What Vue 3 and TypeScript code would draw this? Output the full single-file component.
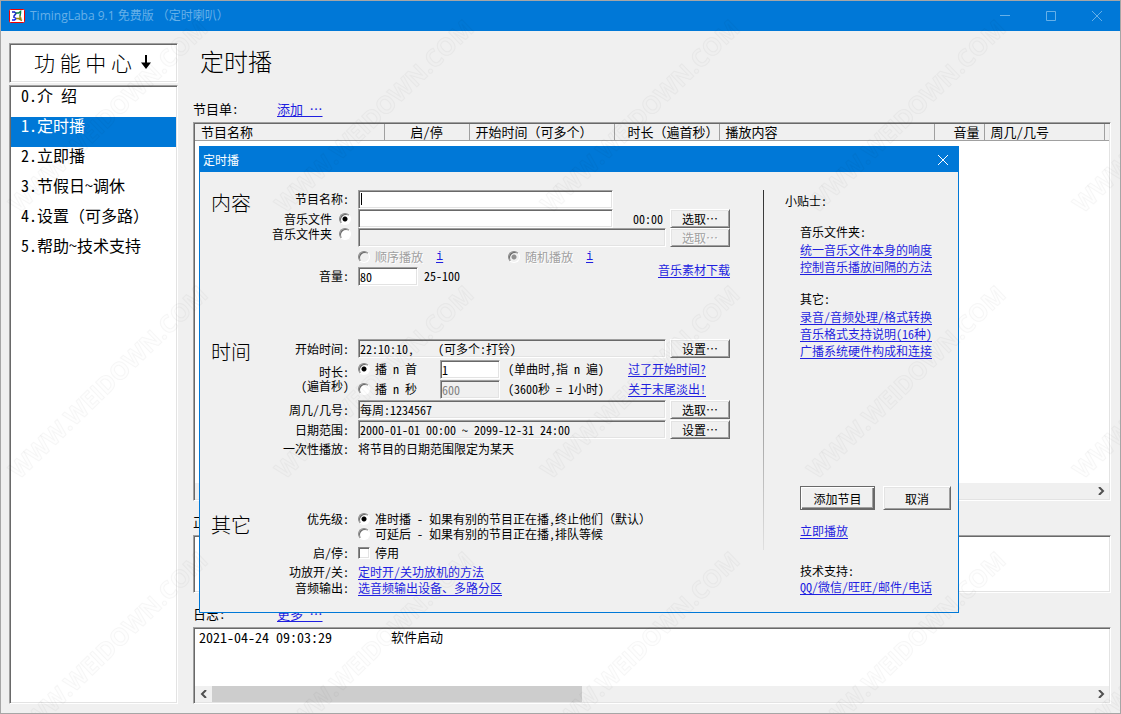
<script setup lang="ts">
import { ref } from 'vue'

interface Column {
  title: string
  width: string
  align: 'left' | 'center' | 'right' | 'end'
  full?: boolean
}

interface MenuItem {
  label: string
  note?: string
}

const menu: MenuItem[] = [
  { label: '0.介 绍' },
  { label: '1.定时播' },
  { label: '2.立即播' },
  { label: '3.节假日~调休' },
  { label: '4.设置', note: '（可多路）' },
  { label: '5.帮助~技术支持' },
]
const active = ref(1)

const columns: Column[] = [
  { title: '节目名称', width: '189px', align: 'left' },
  { title: '启/停', width: '85px', align: 'center' },
  { title: '开始时间（可多个）', width: '145px', align: 'left', full: true },
  { title: '时长（遍首秒）', width: '105px', align: 'end', full: true },
  { title: '播放内容', width: '215px', align: 'left' },
  { title: '音量', width: '50px', align: 'right' },
  { title: '周几/几号', width: '120px', align: 'left' },
  { title: '', width: 'auto', align: 'left' },
]

const name = ref('')
const file = ref('')
const folder = ref('')
const source = ref('file')
const order = ref('random')
const volume = ref('80')
const startTime = ref('22:10:10,    (可多个:打铃)')
const lengthMode = ref('songs')
const songs = ref('1')
const seconds = ref('600')
const weekdays = ref('每周:1234567')
const dateRange = ref('2000-01-01 00:00 ~ 2099-12-31 24:00')
const priority = ref('punctual')
const disabled = ref(false)
</script>

<template>
  <div class="window">
    <header class="titlebar">
      <svg class="logo" viewBox="0 0 16 14" aria-hidden="true">
        <rect x="0.5" y="0.5" width="15" height="13" rx="1" fill="#fff" stroke="#f00000" />
        <path d="M3 3h2.500l1.500 1.500L5 7V9" fill="none" stroke="#1828c8" stroke-width="1.500" />
        <path d="M3 11h2.500L7 9.500 5.500 8.500" fill="none" stroke="#1020f0" stroke-width="1.500" />
        <path d="M6.500 4h3l2-1.500V4L11 7" fill="none" stroke="#108048" stroke-width="1.500" />
        <path d="M7 9.500h2.500L13 11.500M11 7v2.500l1.500-.5" fill="none" stroke="#988410" stroke-width="1.500" />
      </svg>
      <span class="title">TimingLaba 9.1 免费版  （定时喇叭）</span>
      <div class="caption">
        <button type="button" aria-label="最小化"><svg viewBox="0 0 10 10"><path d="M0 4.500h10" /></svg></button>
        <button type="button" aria-label="最大化"><svg viewBox="0 0 10 10"><path d="M.5.5h9v9h-9z" /></svg></button>
        <button type="button" aria-label="关闭"><svg viewBox="0 0 10 10"><path d="M0 0l10 10M10 0L0 10" /></svg></button>
      </div>
    </header>

    <div class="body">
      <aside class="side">
        <div class="sunken side-head">
          <span>功 能 中 心</span>
          <svg viewBox="0 0 10 14" aria-hidden="true"><path d="M4 0h2v7.500h4L5 14 0 7.500h4z" /></svg>
        </div>
        <nav class="sunken menu">
          <button
            v-for="(item, i) in menu"
            :key="item.label"
            type="button"
            :class="{ on: i === active }"
            @click="active = i"
          >{{ item.label }}<span v-if="item.note" class="full">{{ item.note }}</span></button>
        </nav>
      </aside>

      <main class="main">
        <h1>定时播</h1>
        <div class="bar first"><span>节目单:</span><a href="#">添加 …</a></div>
        <div class="sunken programs">
          <table>
            <colgroup><col v-for="(c, i) in columns" :key="i" :style="{ width: c.width }" /></colgroup>
            <thead>
              <tr><th v-for="(c, i) in columns" :key="i" :class="[c.align, { full: c.full }]">{{ c.title }}</th></tr>
            </thead>
          </table>
          <div class="scroll">
            <button type="button" aria-label="向左"><svg viewBox="0 0 8 8"><path d="M6 0L2 4l4 4" /></svg></button>
            <button type="button" aria-label="向右"><svg viewBox="0 0 8 8"><path d="M2 0l4 4-4 4" /></svg></button>
          </div>
        </div>

        <div class="bar"><span>正</span></div>
        <div class="sunken playing"></div>

        <div class="bar"><span>日志:</span><a href="#">更多 …</a></div>
        <div class="sunken log">
          <div class="entry"><time>2021-04-24 09:03:29</time><span>软件启动</span></div>
          <div class="scroll">
            <button type="button" aria-label="向左"><svg viewBox="0 0 8 8"><path d="M6 0L2 4l4 4" /></svg></button>
            <div class="track"><div class="thumb"></div></div>
            <button type="button" aria-label="向右"><svg viewBox="0 0 8 8"><path d="M2 0l4 4-4 4" /></svg></button>
          </div>
        </div>
      </main>
    </div>

    <div class="dialog" role="dialog" aria-labelledby="dialog-title">
      <div class="dialog-bar">
        <span id="dialog-title">定时播</span>
        <button type="button" aria-label="关闭"><svg viewBox="0 0 10 10"><path d="M0 0l10 10M10 0L0 10" /></svg></button>
      </div>
      <div class="dialog-body">
        <form class="form" @submit.prevent>
          <section>
            <h2>内容</h2>
            <div class="rows">
              <div class="row">
                <label class="label" for="name">节目名称:</label>
                <div class="box mid caret"><input id="name" v-model="name" type="text" /></div>
              </div>
              <div class="row r19">
                <label class="label pick">音乐文件<input v-model="source" type="radio" name="source" value="file" /></label>
                <input v-model="file" class="box mid" type="text" aria-label="音乐文件" />
                <span class="clock">00:00</span>
                <button type="button" class="btn">选取…</button>
              </div>
              <div class="row r19">
                <label class="label pick up">音乐文件夹<input v-model="source" type="radio" name="source" value="folder" /></label>
                <input v-model="folder" class="box wide" type="text" aria-label="音乐文件夹" disabled />
                <button type="button" class="btn" disabled>选取…</button>
              </div>
              <div class="row r19">
                <span class="label"></span>
                <div class="order">
                  <label class="opt off"><input v-model="order" type="radio" name="order" value="seq" disabled />顺序播放</label>
                  <a class="info" href="#">i</a>
                </div>
                <div class="order">
                  <label class="opt off"><input v-model="order" type="radio" name="order" value="random" disabled />随机播放</label>
                  <a class="info" href="#">i</a>
                </div>
              </div>
              <div class="row">
                <label class="label" for="volume">音量:</label>
                <input id="volume" v-model="volume" class="box small" type="text" />
                <span class="note">25-100</span>
                <a class="material" href="#">音乐素材下载</a>
              </div>
            </div>
          </section>

          <section>
            <h2>时间</h2>
            <div class="rows">
              <div class="row r21">
                <label class="label" for="start">开始时间:</label>
                <input id="start" v-model="startTime" class="box wide grey" type="text" readonly />
                <button type="button" class="btn">设置…</button>
              </div>
              <div class="row r40">
                <span class="label two">时长:<br />(遍首秒)</span>
                <div class="duration">
                  <label class="opt"><input v-model="lengthMode" type="radio" name="length" value="songs" />播 n 首</label>
                  <input v-model="songs" class="box small" type="text" aria-label="首数" />
                  <span>(单曲时,指 n 遍)</span>
                  <a href="#">过了开始时间?</a>
                  <label class="opt"><input v-model="lengthMode" type="radio" name="length" value="seconds" />播 n 秒</label>
                  <input v-model="seconds" class="box small" type="text" aria-label="秒数" disabled />
                  <span>(3600秒 = 1小时)</span>
                  <a href="#">关于末尾淡出!</a>
                </div>
              </div>
              <div class="row r21">
                <label class="label" for="days">周几/几号:</label>
                <input id="days" v-model="weekdays" class="box wide grey" type="text" readonly />
                <button type="button" class="btn">选取…</button>
              </div>
              <div class="row r19">
                <label class="label" for="range">日期范围:</label>
                <input id="range" v-model="dateRange" class="box wide grey" type="text" readonly />
                <button type="button" class="btn">设置…</button>
              </div>
              <div class="row">
                <span class="label">一次性播放:</span>
                <span>将节目的日期范围限定为某天</span>
              </div>
            </div>
          </section>

          <section>
            <h2>其它</h2>
            <div class="rows">
              <div class="row r15">
                <span class="label">优先级:</span>
                <label class="opt">
                  <input v-model="priority" type="radio" name="priority" value="punctual" />
                  <span>准时播 - 如果有别的节目正在播,终止他们<span class="full">（默认）</span></span>
                </label>
              </div>
              <div class="row r15">
                <span class="label"></span>
                <label class="opt"><input v-model="priority" type="radio" name="priority" value="delay" />可延后 - 如果有别的节目正在播,排队等候</label>
              </div>
              <div class="row r23">
                <span class="label">启/停:</span>
                <label class="opt"><input v-model="disabled" type="checkbox" />停用</label>
              </div>
              <div class="row r16">
                <span class="label">功放开/关:</span>
                <a href="#">定时开/关功放机的方法</a>
              </div>
              <div class="row r16">
                <span class="label">音频输出:</span>
                <a href="#">选音频输出设备、多路分区</a>
              </div>
            </div>
          </section>
        </form>

        <div class="rule"></div>

        <div class="tips">
          <p class="tips-title">小贴士:</p>
          <div class="group">
            <p>音乐文件夹:</p>
            <a href="#">统一音乐文件本身的响度</a>
            <a href="#">控制音乐播放间隔的方法</a>
          </div>
          <div class="group">
            <p>其它:</p>
            <a href="#">录音/音频处理/格式转换</a>
            <a href="#">音乐格式支持说明(16种)</a>
            <a href="#">广播系统硬件构成和连接</a>
          </div>
          <div class="actions">
            <button type="button" class="btn default">添加节目</button>
            <button type="button" class="btn">取消</button>
          </div>
          <a class="now" href="#">立即播放</a>
          <div class="support">
            <p>技术支持:</p>
            <a href="#">QQ/微信/旺旺/邮件/电话</a>
          </div>
        </div>
      </div>
    </div>

    <svg class="watermark" aria-hidden="true">
      <defs>
        <pattern id="mark" x="0" y="-49" width="266" height="266" patternUnits="userSpaceOnUse">
          <text x="18" y="262" transform="rotate(-44 18 262)">WWW.WEIDOWN.COM</text>
        </pattern>
      </defs>
      <rect width="100%" height="100%" fill="url(#mark)" />
    </svg>
  </div>
</template>

<style>
body {
  margin: 0;
}
</style>

<style scoped>
.window {
  position: relative;
  box-sizing: border-box;
  min-height: 100vh;
  display: flex;
  flex-direction: column;
  overflow: hidden;
  border: 1px solid #a6a6a6;
  background: #f0f0f0;
  color: #000;
  font: 13px/18px "Noto Sans CJK SC", "Liberation Sans", sans-serif;
  font-feature-settings: "hwid";
}
.window .full {
  font-feature-settings: normal;
}
button,
input {
  font: inherit;
  font-feature-settings: inherit;
  color: inherit;
  margin: 0;
  padding: 0;
  border: 0;
  outline: 0;
  box-sizing: border-box;
}
p,
h1,
h2 {
  margin: 0;
  font-weight: 300;
}
p {
  font-weight: 400;
}
a {
  color: #1f1fe0;
  text-decoration: underline;
  text-underline-offset: 2px;
  white-space: nowrap;
}

.titlebar {
  display: flex;
  align-items: center;
  height: 30px;
  padding-left: 8px;
  background: #0078d7;
  color: #66b0e8;
}
.logo {
  width: 16px;
  height: 14px;
  margin-right: 5px;
}
.title {
  flex: 1;
  font: 12px/18px "Open Sans", "Noto Sans CJK SC", sans-serif;
  font-feature-settings: normal;
  white-space: pre;
}
.caption {
  display: flex;
}
.caption button {
  width: 46px;
  height: 30px;
  display: grid;
  place-items: center;
  background: none;
}
.caption svg,
.dialog-bar svg {
  width: 10px;
  height: 10px;
  fill: none;
  stroke: currentColor;
}

.body {
  flex: 1;
  display: flex;
  gap: 15px;
  padding: 12px 9px 9px 8px;
}
.sunken {
  box-sizing: border-box;
  padding: 1px;
  border: 1px solid;
  border-color: #a0a0a0 #fff #fff #a0a0a0;
  box-shadow: inset 1px 1px #696969, inset -1px -1px #e3e3e3;
  background: #fff;
}
.side {
  width: 169px;
  display: flex;
  flex-direction: column;
  gap: 2px;
}
.side-head {
  height: 40px;
  display: flex;
  align-items: center;
  gap: 9px;
  padding: 0 0 2px 24px;
  font-size: 21px;
  font-weight: 300;
  line-height: 30px;
  font-feature-settings: normal;
}
.side-head svg {
  width: 10px;
  height: 14px;
}
.menu {
  flex: 1;
  display: flex;
  flex-direction: column;
}
.menu button {
  height: 30px;
  padding: 0 0 14px 10px;
  background: none;
  font-size: 16px;
  line-height: 16px;
  text-align: left;
  white-space: pre;
}
.menu .on {
  background: #0078d7;
  color: #fff;
}

.main {
  flex: 1;
  min-width: 0;
  display: flex;
  flex-direction: column;
}
h1 {
  padding-left: 7px;
  font-size: 24px;
  line-height: 36px;
}
.bar {
  display: flex;
  height: 18px;
  margin: 13px 0 3px;
  line-height: 16px;
}
.bar.first {
  margin-top: 22px;
}
.bar span {
  width: 84px;
}
.programs {
  flex: 1;
  display: flex;
  flex-direction: column;
  justify-content: space-between;
}
table {
  width: 100%;
  table-layout: fixed;
  border-collapse: collapse;
}
th {
  box-sizing: border-box;
  height: 16px;
  padding: 0 6px;
  border: solid #a0a0a0;
  border-width: 0 1px 1px 0;
  background: #f0f0f0;
  font-weight: 400;
  line-height: 15px;
  text-align: left;
  white-space: nowrap;
}
th:last-child {
  border-right: 0;
}
.center {
  text-align: center;
}
.right {
  text-align: right;
  padding-right: 4px;
}
.end {
  text-align: right;
  padding-right: 0;
}
.playing {
  height: 58px;
}
.log {
  height: 77px;
  display: flex;
  flex-direction: column;
  justify-content: space-between;
}
.entry {
  display: flex;
  padding-left: 4px;
  line-height: 16px;
}
.entry time {
  width: 192px;
  font-size: 14px;
}
.scroll {
  display: flex;
  justify-content: space-between;
  height: 16px;
  background: #f0f0f0;
}
.scroll button {
  width: 17px;
  display: grid;
  place-items: center;
  background: none;
}
.scroll svg {
  width: 8px;
  height: 8px;
  fill: none;
  stroke: #505050;
  stroke-width: 2;
}
.track {
  flex: 1;
}
.thumb {
  width: 42%;
  height: 100%;
  background: #cdcdcd;
}

.dialog {
  position: absolute;
  left: 198px;
  top: 145px;
  width: 758px;
  border: 1px solid #0078d7;
  background: #f0f0f0;
  font-size: 12px;
  line-height: 16px;
}
.dialog-bar {
  display: flex;
  justify-content: space-between;
  align-items: center;
  height: 25px;
  padding-left: 3px;
  background: #0078d7;
  color: #fff;
}
.dialog-bar button {
  width: 30px;
  height: 25px;
  display: grid;
  place-items: center;
  background: none;
}
.dialog-body {
  display: flex;
  padding: 17px 0 16px 11px;
}
.form {
  display: flex;
  flex-direction: column;
  gap: 52px;
  width: 519px;
}
section {
  display: flex;
}
h2 {
  width: 60px;
  font-size: 20px;
  line-height: 28px;
}
.rows {
  flex: 1;
}
.row {
  display: flex;
  align-items: center;
  height: 20px;
  white-space: nowrap;
}
.r15 { height: 15px; }
.r16 { height: 16px; }
.r19 { height: 19px; }
.r21 { height: 21px; }
.r23 { height: 23px; }
.r40 { height: 40px; }
.label {
  box-sizing: border-box;
  width: 80px;
  padding-right: 2px;
  margin-right: 7px;
  text-align: right;
}
.two {
  line-height: 14px;
}
.pick {
  display: flex;
  justify-content: flex-end;
  align-items: center;
  gap: 7px;
  padding-right: 0;
}
.up {
  align-self: flex-start;
  line-height: 12px;
}
.box {
  box-sizing: border-box;
  height: 19px;
  padding: 1px;
  border: 1px solid;
  border-color: #a0a0a0 #fff #fff #a0a0a0;
  box-shadow: inset 1px 1px #696969, inset -1px -1px #e3e3e3;
  background: #fff;
  line-height: 15px;
}
.box:disabled,
.grey {
  background: #f0f0f0;
}
.box:disabled {
  color: #808080;
}
.mid {
  width: 255px;
}
.wide {
  width: 308px;
}
.small {
  width: 60px;
}
.caret {
  display: flex;
  align-items: center;
}
.caret::before {
  content: "";
  width: 1px;
  height: 12px;
  margin-left: 1px;
  background: #000;
}
.caret input {
  flex: 1;
  min-width: 0;
  height: 15px;
  background: none;
}
.clock {
  margin-left: 20px;
}
.btn {
  width: 60px;
  height: 19px;
  margin-left: auto;
  border: 1px solid;
  border-color: #fff #696969 #696969 #fff;
  box-shadow: inset 1px 1px #e3e3e3, inset -1px -1px #a0a0a0;
  background: #f0f0f0;
  line-height: 15px;
}
.btn:disabled {
  color: #a0a0a0;
  text-shadow: 1px 1px #fff;
}
.order {
  display: flex;
  align-items: center;
  width: 150px;
}
.info {
  margin-left: 13px;
  font-family: "Liberation Mono", monospace;
}
.note {
  margin-left: 6px;
}
.material {
  align-self: flex-start;
  margin: -4px 0 0 auto;
}
.opt {
  display: flex;
  align-items: center;
  gap: 5px;
}
.off {
  color: #a0a0a0;
  text-shadow: 1px 1px #fff;
}
input[type="radio"],
input[type="checkbox"] {
  appearance: none;
  width: 12px;
  height: 12px;
  flex: none;
  border: 1px solid;
  border-color: #8a8a8a #fff #fff #8a8a8a;
  background: #fff;
}
input[type="radio"] {
  border-radius: 50%;
  box-shadow: inset 1px 1px #696969;
}
input[type="radio"]:checked {
  background: radial-gradient(circle, #000 0 2px, #fff 3px);
}
input[type="radio"]:disabled {
  background: #f0f0f0;
}
input[type="radio"]:checked:disabled {
  background: radial-gradient(circle, #909090 0 2px, #f0f0f0 3px);
}
input[type="checkbox"] {
  box-shadow: inset 1px 1px #696969, inset -1px -1px #e3e3e3;
}
input[type="checkbox"]:checked {
  background: linear-gradient(#000, #000) center / 6px 6px no-repeat #fff;
}
.duration {
  display: grid;
  grid-template-columns: 82px 68px 120px auto;
  grid-auto-rows: 20px;
  align-items: center;
}
.rule {
  width: 1px;
  height: 360px;
  margin: 1px 21px 0 33px;
  background: linear-gradient(#303030, #808080 45%, #e0e0e0);
}
.tips {
  flex: 1;
  padding-top: 4px;
}
.group {
  margin: 15px 0 0 15px;
  line-height: 17px;
}
.tips-title + .group {
  margin-top: 14px;
}
.group p {
  line-height: 18px;
}
.group a,
.support a {
  display: block;
}
.actions {
  display: flex;
  gap: 8px;
  margin: 127px 0 0 15px;
}
.actions .btn {
  width: 68px;
  height: 24px;
  margin: 0;
}
.actions .default {
  width: 75px;
  border-color: #696969;
  box-shadow: inset 1px 1px #fff, inset -1px -1px #696969, inset -2px -2px #a0a0a0;
}
.now {
  display: inline-block;
  margin: 13px 0 0 15px;
}
.support {
  margin: 24px 0 0 15px;
}

.watermark {
  position: absolute;
  inset: 0;
  width: 100%;
  height: 100%;
  pointer-events: none;
}
.watermark text {
  font: 700 24px "Open Sans", sans-serif;
  fill: rgba(0, 0, 0, 0.004);
  stroke: rgba(0, 0, 0, 0.03);
  stroke-width: 1;
}
</style>
